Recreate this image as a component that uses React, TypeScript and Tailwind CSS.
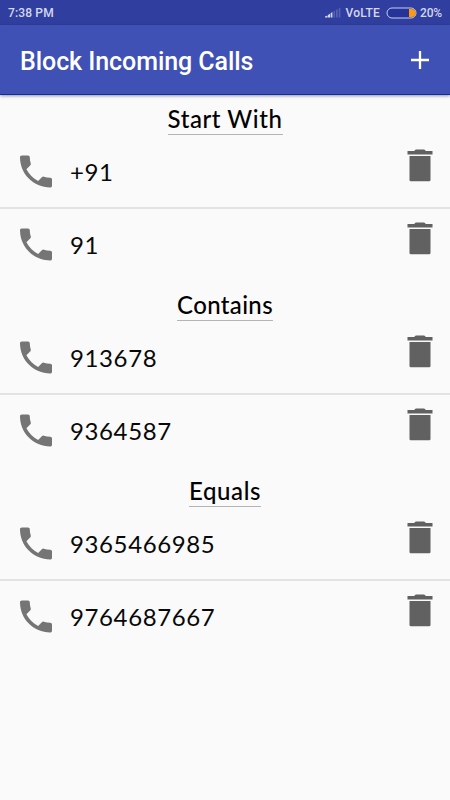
interface RuleSection {
  title: string;
  titleClass: string;
  numbers: string[];
}

const SECTIONS: RuleSection[] = [
  { title: "Start With", titleClass: "w-[115px] tracking-[0.55px]", numbers: ["+91", "91"] },
  { title: "Contains", titleClass: "w-[96px] tracking-[0.35px]", numbers: ["913678", "9364587"] },
  { title: "Equals", titleClass: "w-[72px] tracking-[0.6px]", numbers: ["9365466985", "9764687667"] },
];

function PhoneIcon() {
  return (
    <svg viewBox="3 2.8 18 18.5" className="mt-[20px] h-[33px] w-8 shrink-0 fill-[#757575]">
      <path d="M6.62 10.79c1.44 2.83 3.76 5.14 6.59 6.59l2.2-2.2c.27-.27.67-.36 1.02-.24 1.12.37 2.33.57 3.57.57.55 0 1 .45 1 1V20c0 .55-.45 1-1 1-9.39 0-17-7.61-17-17 0-.55.45-1 1-1h3.5c.55 0 1 .45 1 1 0 1.25.2 2.45.57 3.57.11.35.03.74-.25 1.02l-2.2 2.2z" />
    </svg>
  );
}

function TrashIcon() {
  return (
    <svg viewBox="-0.5 -0.4 26 33" className="h-[33px] w-[26px] fill-[#616161]">
      <path d="M0 1.7h6.5L8.3 0h8.4l1.8 1.7H25V5H0z" />
      <path d="M2 6.7h21v23.8a1.3 1.3 0 0 1-1.3 1.3H3.3A1.3 1.3 0 0 1 2 30.5z" />
    </svg>
  );
}

function SignalIcon() {
  return (
    <svg viewBox="0 0 16 11" className="h-[11px] w-4">
      <path d="M0 10.5V9.6L2.6 8.4v2.1zM3 10.5V7.9L5 6.7v3.8zM5.6 10.5V6.2L7.4 5v5.5z" fill="#d5d8ee" />
      <path d="M8.4 10.5V4.5l1.6-1v7zM11 10.5V2.9l1.7-1v8.6zM13.8 10.5V1.4L15.4.4v10.1z" fill="#5662b2" />
    </svg>
  );
}

function BatteryIcon() {
  return (
    <svg viewBox="0 0 31 12" className="h-3 w-[31px]">
      <rect x="1" y="1" width="29" height="10" rx="5" fill="#26349a" stroke="#c8cdf0" strokeWidth="1" />
      <path d="M23 2h2.5a4 4 0 0 1 0 8H23z" fill="#ff9b0b" />
    </svg>
  );
}

function StatusBar() {
  return (
    <div className="flex h-[25px] items-center justify-between bg-[#303f9f] pr-[8px] pl-[8px] text-[12px] font-medium text-[#d5d8ee]">
      <span className="tracking-[0.15px]">7:38 PM</span>
      <div className="flex items-center">
        <SignalIcon />
        <span className="ml-[4px] tracking-[0.25px]">VoLTE</span>
        <span className="ml-[6px]">
          <BatteryIcon />
        </span>
        <span className="ml-[3px] text-[12px] tracking-[-0.2px]">20%</span>
      </div>
    </div>
  );
}

function NumberRow({ value, divided }: { value: string; divided: boolean }) {
  return (
    <li className="relative flex h-[73.3px] pr-[17px] pl-[20px]">
      <PhoneIcon />
      <span className="mt-[21px] ml-[18px] flex-1 text-[24px] leading-[32px] tracking-[0.62px] text-[#080808]">
        {value}
      </span>
      <button className="mt-[14.5px] h-[33px]" aria-label={`Delete ${value}`}>
        <TrashIcon />
      </button>
      {divided && <div className="absolute inset-x-0 bottom-[-1px] h-[2px] bg-[#e3e3e3]" />}
    </li>
  );
}

export default function App() {
  return (
    <div className="h-[800px] w-[450px] overflow-hidden bg-[#fafafa] font-['Roboto',sans-serif]">
      <StatusBar />
      <header className="flex h-[70px] items-center justify-between border-b border-[#0d2cae] bg-[#3f51b5] pr-[21px] pl-[20px] text-white shadow-[0_1px_3px_rgba(0,0,0,0.4)]">
        <h1 className="pt-[3px] text-[25px] leading-none font-medium tracking-[-0.07px]">Block Incoming Calls</h1>
        <svg viewBox="0 0 18 18" className="h-[18px] w-[18px]">
          <path d="M9 0v18M0 9h18" stroke="white" strokeWidth="2.3" />
        </svg>
      </header>
      <main className="font-['Lato',sans-serif]">
        {SECTIONS.map(({ title, titleClass, numbers }) => (
          <section key={title}>
            <div className="flex h-[39.5px] justify-center">
              <h2
                className={`${titleClass} h-full border-b border-[#b4b4b4] pt-[8px] text-center text-[24px] leading-[32px] font-medium whitespace-nowrap text-black`}
              >
                {title}
              </h2>
            </div>
            <ul>
              {numbers.map((value, i) => (
                <NumberRow key={value} value={value} divided={i < numbers.length - 1} />
              ))}
            </ul>
          </section>
        ))}
      </main>
    </div>
  );
}
